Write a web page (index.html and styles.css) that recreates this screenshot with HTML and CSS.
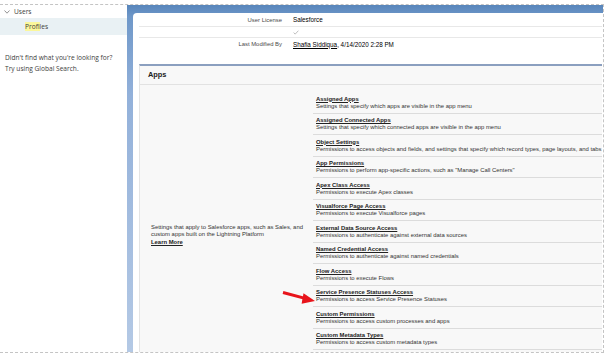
FILE: index.html
```html
<!DOCTYPE html>
<html lang="en">
  <head>
    <meta charset="UTF-8" />
    <title>Profile - Apps</title>
    <link rel="stylesheet" href="styles.css">
  </head>
  <body>
    <div class="frame">
      <div class="sidebar">
        <div class="tree-row">
          <svg class="chevron" width="6" height="4" viewBox="0 0 6 4"><path d="M0.5 0.5 L3 3.2 L5.5 0.5" fill="none" stroke="#777" stroke-width="0.8"/></svg>
          <span>Users</span>
        </div>
        <div class="tree-row child selected"><span><mark>Profi</mark>les</span></div>
        <p class="not-found">Didn't find what you're looking for?<br>Try using Global Search.</p>
      </div>

      <div class="main">
        <div class="card">
          <div class="detail">
            <div class="detail-row r1">
              <div class="label">User License</div>
              <div class="value">Salesforce</div>
            </div>
            <div class="detail-row r2">
              <div class="label"></div>
              <div class="value">
                <svg width="6" height="5" viewBox="0 0 6 5"><path d="M0.6 2.6 L2.2 4.1 L5.4 0.7" fill="none" stroke="#b5b5b5" stroke-width="0.9"/></svg>
              </div>
            </div>
            <div class="detail-row r3">
              <div class="label">Last Modified By</div>
              <div class="value"><a href="#">Shafia Siddiqua</a>, 4/14/2020 2:28 PM</div>
            </div>
          </div>

          <div class="panel">
            <div class="panel-head">Apps</div>
            <div class="panel-body">
              <div class="intro">
                <p>Settings that apply to Salesforce apps, such as Sales, and<br>custom apps built on the Lightning Platform<br><a href="#">Learn More</a></p>
              </div>
              <ul class="links">
                <li><a href="#">Assigned Apps</a><span>Settings that specify which apps are visible in the app menu</span></li>
                <li><a href="#">Assigned Connected Apps</a><span>Settings that specify which connected apps are visible in the app menu</span></li>
                <li><a href="#">Object Settings</a><span>Permissions to access objects and fields, and settings that specify which record types, page layouts, and tabs</span></li>
                <li><a href="#">App Permissions</a><span>Permissions to perform app-specific actions, such as "Manage Call Centers"</span></li>
                <li><a href="#">Apex Class Access</a><span>Permissions to execute Apex classes</span></li>
                <li><a href="#">Visualforce Page Access</a><span>Permissions to execute Visualforce pages</span></li>
                <li><a href="#">External Data Source Access</a><span>Permissions to authenticate against external data sources</span></li>
                <li><a href="#">Named Credential Access</a><span>Permissions to authenticate against named credentials</span></li>
                <li><a href="#">Flow Access</a><span>Permissions to execute Flows</span></li>
                <li><a href="#">Service Presence Statuses Access</a><span>Permissions to access Service Presence Statuses</span></li>
                <li><a href="#">Custom Permissions</a><span>Permissions to access custom processes and apps</span></li>
                <li><a href="#">Custom Metadata Types</a><span>Permissions to access custom metadata types</span></li>
              </ul>
            </div>
          </div>
        </div>
      </div>

      <svg class="arrow" width="40" height="20" viewBox="0 0 40 20">
        <path d="M1 3.5 L24 9.6" stroke="#e8141b" stroke-width="3" fill="none"/>
        <path d="M33 12 L21.5 4.2 L19.6 14.8 Z" fill="#e8141b"/>
      </svg>
    </div>
  </body>
</html>
```

FILE: styles.css
```css
body {
  margin: 0;
  background: #fff;
  font-family: "Liberation Sans", Arial, sans-serif;
  color: #333;
}

.frame {
  position: relative;
  display: flex;
  width: 603px;
  height: 347px;
  margin-top: 4px;
  border-top: 1px dashed #c4c4c4;
  border-right: 1px dashed #c4c4c4;
  border-bottom: 1px dashed #c4c4c4;
  overflow: hidden;
}

/* left tree */
.sidebar {
  width: 127px;
  flex: none;
  font-family: "Open Sans", sans-serif;
  font-size: 6.6px;
  color: #3e3e3c;
}

.tree-row {
  display: flex;
  align-items: center;
  gap: 4px;
  height: 13px;
  padding-left: 4px;
}

.tree-row.child {
  height: 17px;
  padding-left: 25px;
}

.selected {
  background: #e9f1f4;
}

mark {
  background: #fbf79b;
  color: inherit;
}

.not-found {
  margin: 17px 0 0 5px;
  line-height: 11px;
}

/* main area */
.main {
  flex: 1;
  padding: 8px 0 0 6px;
  background: linear-gradient(#5785bb 0, #6f98c9 12px, #93b1da 90px, #b4c9e5 100%);
}

.card {
  height: 100%;
  background: #fff;
  border-top-left-radius: 4px;
  padding: 0 1px 0 6px;
  font-size: 5.9px;
}

.detail-row {
  display: flex;
  align-items: center;
  border-bottom: 1px solid #e8e8e8;
}

.detail-row.r1 { height: 13px; }
.detail-row.r2 { height: 10px; }
.detail-row.r3 { height: 12px; border-bottom: none; }

.label {
  width: 143px;
  padding-right: 7px;
  text-align: right;
  color: #4a4a4a;
}

.value {
  padding-left: 4px;
  color: #000;
  font-size: 6.3px;
  display: flex;
}

.value a {
  color: #000;
}

/* apps section */
.panel {
  margin-top: 14px;
  background: #f8f8f8;
  border-top: 2px solid #8b9fbf;
  border-left: 1px solid #e4e4e4;
  overflow: hidden;
}

.panel-head {
  height: 18px;
  line-height: 18px;
  padding-left: 8px;
  font-size: 7.4px;
  font-weight: bold;
  color: #222;
  border-bottom: 1px solid #e2e2e2;
}

.panel-body {
  display: flex;
}

.intro {
  width: 162px;
  flex: none;
  display: flex;
  align-items: center;
  padding-left: 11px;
}

.intro p {
  margin: 0;
  line-height: 7.5px;
}

.intro a,
.links a {
  color: #222;
  font-weight: bold;
}

.links {
  list-style: none;
  margin: 0;
  padding: 7px 0 35px 0;
  flex: 1;
  white-space: nowrap;
}

.links li {
  display: flex;
  flex-direction: column;
  padding: 3.5px 0 3px 3px;
  line-height: 7px;
  border-bottom: 1px solid #dcdcdc;
}

.links span {
  color: #333;
}

.arrow {
  position: absolute;
  left: 282px;
  top: 284px;
}
```
